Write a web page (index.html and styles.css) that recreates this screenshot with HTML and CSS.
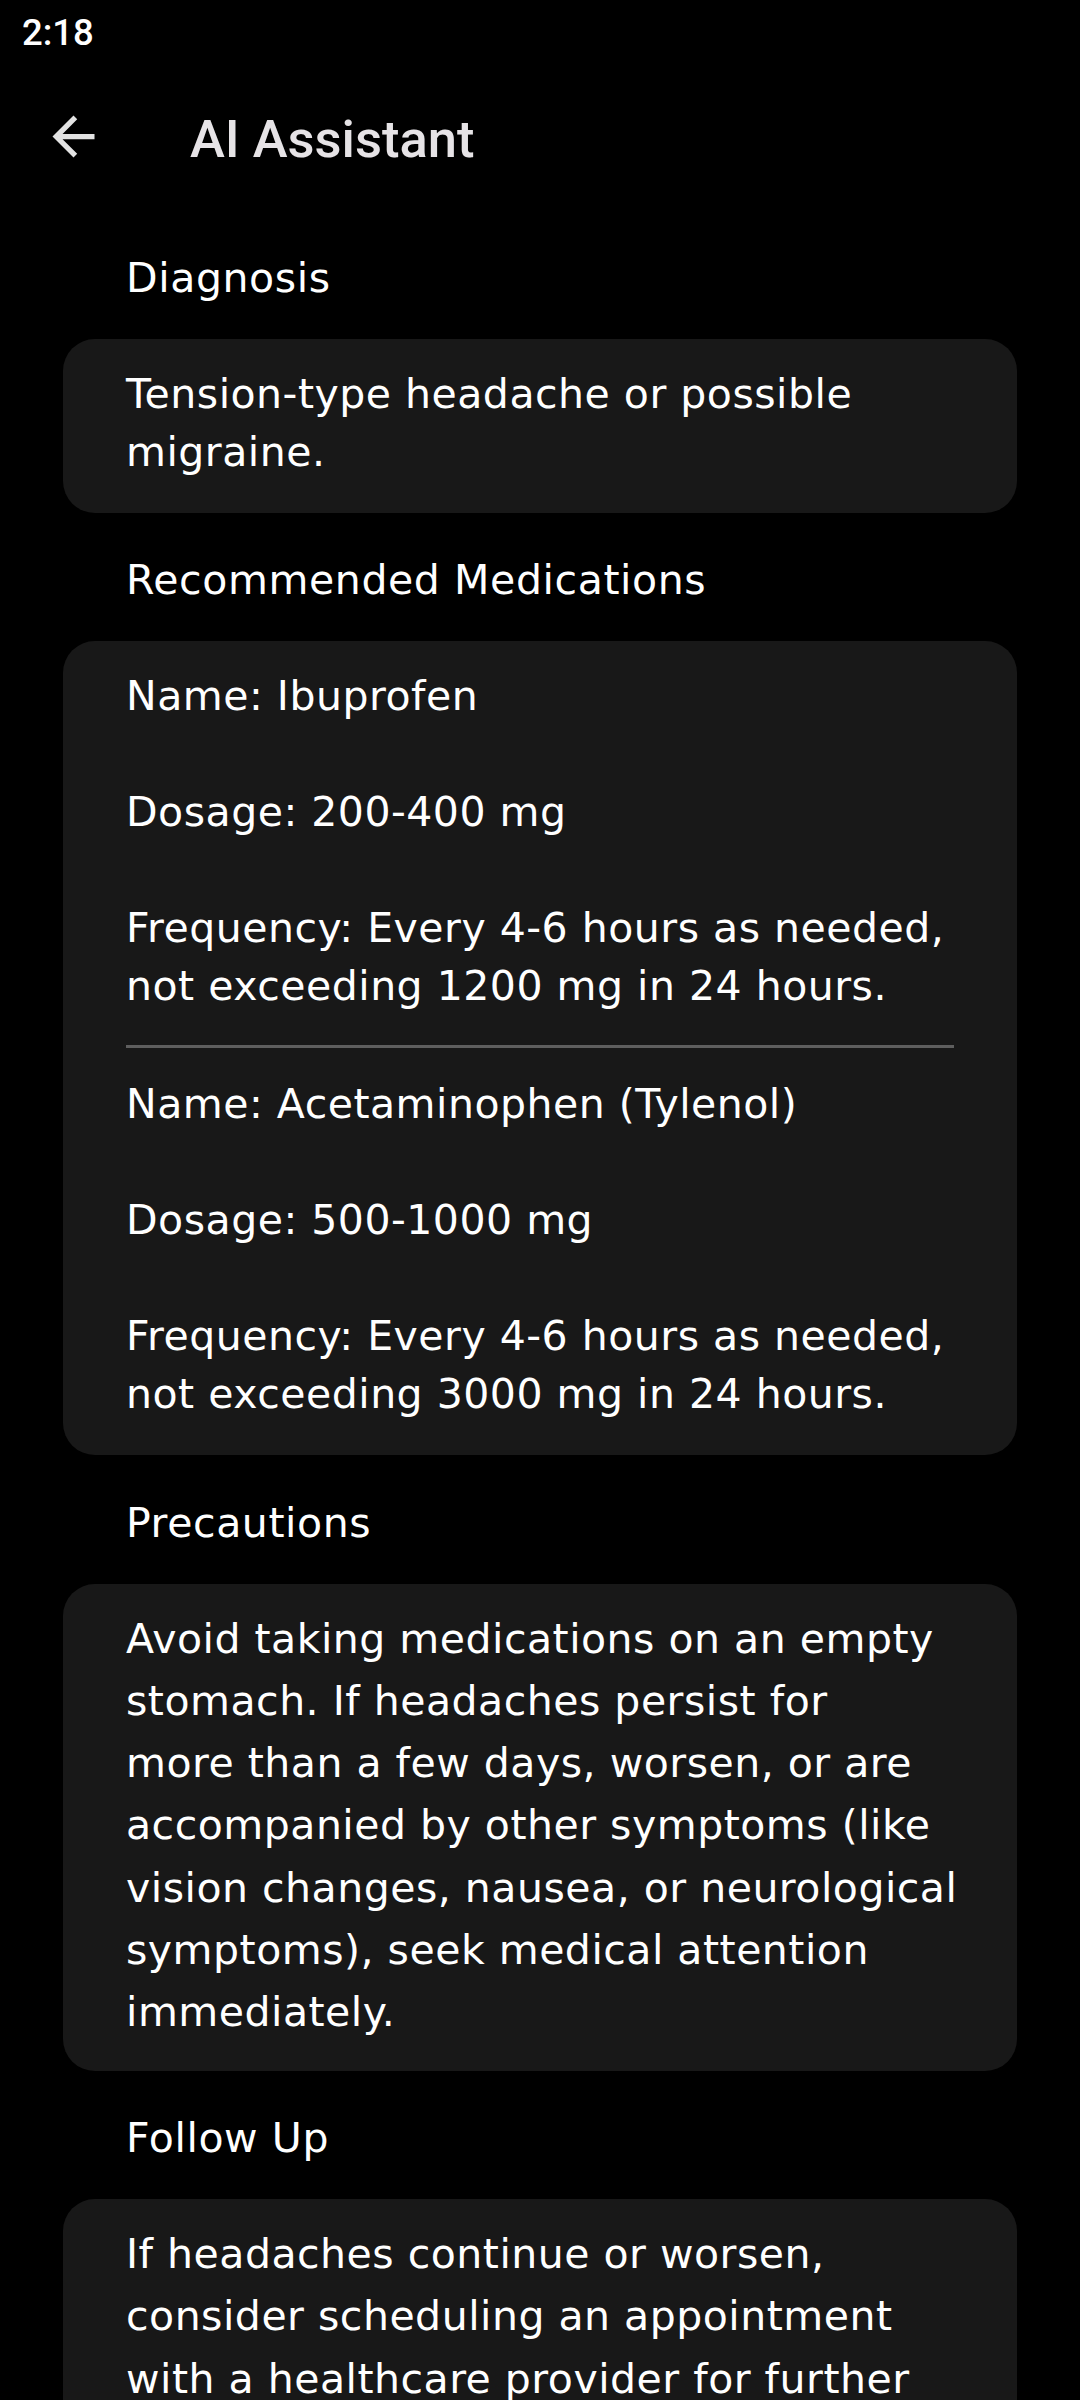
FILE: index.html
```html
<!DOCTYPE html>
<html lang="en">
<head>
<meta charset="utf-8">
<title>AI Assistant</title>
<link rel="stylesheet" href="styles.css">
</head>
<body>
<div class="statusbar"><span class="time">2:18</span></div>
<header class="toolbar">
  <button class="nav-btn" aria-label="Back">
    <svg class="nav-icon" viewBox="0 0 24 24" width="63" height="63"><path d="M20 11H7.83l5.59-5.59L12 4l-8 8 8 8 1.41-1.41L7.83 13H20v-2z"/></svg>
  </button>
  <h1 class="title">AI Assistant</h1>
</header>
<main class="content">
  <section class="section">
    <h2 class="section-title">Diagnosis</h2>
    <div class="card">
      <p class="card-text">Tension-type headache or possible<br>migraine.</p>
    </div>
  </section>
  <section class="section">
    <h2 class="section-title">Recommended Medications</h2>
    <div class="card">
      <div class="med">
        <p class="card-text">Name: Ibuprofen</p>
        <p class="card-text gap">Dosage: 200-400 mg</p>
        <p class="card-text gap">Frequency: Every 4-6 hours as needed,<br>not exceeding 1200 mg in 24 hours.</p>
      </div>
      <hr class="divider">
      <div class="med">
        <p class="card-text">Name: Acetaminophen (Tylenol)</p>
        <p class="card-text gap">Dosage: 500-1000 mg</p>
        <p class="card-text gap">Frequency: Every 4-6 hours as needed,<br>not exceeding 3000 mg in 24 hours.</p>
      </div>
    </div>
  </section>
  <section class="section">
    <h2 class="section-title">Precautions</h2>
    <div class="card card-long">
      <p class="card-text">Avoid taking medications on an empty<br>stomach. If headaches persist for<br>more than a few days, worsen, or are<br>accompanied by other symptoms (like<br>vision changes, nausea, or neurological<br>symptoms), seek medical attention<br>immediately.</p>
    </div>
  </section>
  <section class="section">
    <h2 class="section-title">Follow Up</h2>
    <div class="card card-long">
      <p class="card-text">If headaches continue or worsen,<br>consider scheduling an appointment<br>with a healthcare provider for further<br>evaluation.</p>
    </div>
  </section>
</main>
</body>
</html>
```
FILE: styles.css
```css
* { box-sizing: border-box; }

body {
  margin: 0;
  background: #000;
  color: #fff;
  font-family: "DejaVu Sans", "Noto Sans", sans-serif;
}

.statusbar {
  height: 63px;
  padding: 2px 0 0 22px;
  font-family: Roboto, "Liberation Sans", sans-serif;
  font-size: 36.5px;
  font-weight: 500;
  line-height: 61px;
  color: #fff;
}

.toolbar {
  height: 147px;
  display: flex;
  align-items: center;
  padding-left: 42px;
}

.nav-btn {
  width: 63px;
  height: 63px;
  padding: 0;
  border: 0;
  background: none;
  display: flex;
  align-items: center;
  justify-content: center;
}

.nav-icon { fill: #e3e3e3; display: block; }

.title {
  margin: 5px 0 0 85px;
  font-family: Roboto, "Liberation Sans", sans-serif;
  font-weight: 500;
  font-size: 52.5px;
  line-height: 61px;
  color: #e6e3e6;
}

.content { padding: 0 63px; }

.section-title {
  margin: 38.5px 0 32px;
  padding-left: 63px;
  font-size: 41px;
  font-weight: 400;
  line-height: 58px;
  letter-spacing: 0.6px;
  color: #fff;
}

.card {
  background: #181818;
  border-radius: 32px;
  padding: 26px 63px 32px;
}

.card-text {
  margin: 0;
  font-size: 41px;
  line-height: 58px;
  letter-spacing: 0.5px;
  white-space: nowrap;
}

.card-text.gap { margin-top: 58px; }

.divider {
  height: 3px;
  border: 0;
  margin: 30px 0 27px;
  background: #5e5e5e;
}

.card-long { padding: 24px 63px 27px; }
.card-long .card-text { line-height: 62.3px; }
```
